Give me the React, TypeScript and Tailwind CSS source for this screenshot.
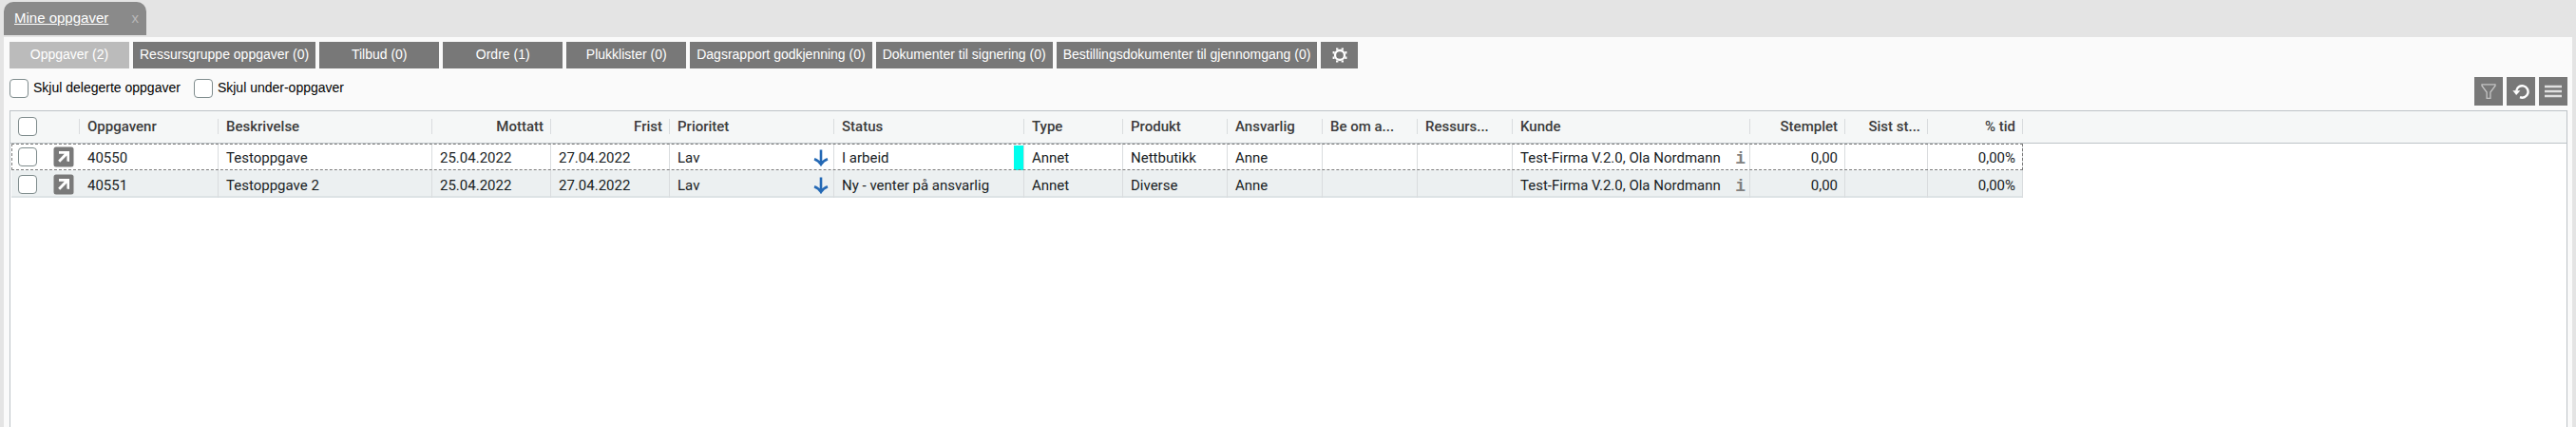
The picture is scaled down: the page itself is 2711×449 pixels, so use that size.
import type { ReactNode } from "react";

type Column = {
  id: string;
  label: string;
  width: string;
  align?: "right";
};

type Task = {
  id: string;
  title: string;
  received: string;
  due: string;
  priority: string;
  status: string;
  product: string;
  selected?: boolean;
};

const TABS = [
  "Oppgaver (2)",
  "Ressursgruppe oppgaver (0)",
  "Tilbud (0)",
  "Ordre (1)",
  "Plukklister (0)",
  "Dagsrapport godkjenning (0)",
  "Dokumenter til signering (0)",
  "Bestillingsdokumenter til gjennomgang (0)",
];

const COLUMNS: Column[] = [
  { id: "nr", label: "Oppgavenr", width: "w-[146px]" },
  { id: "title", label: "Beskrivelse", width: "w-[225px]" },
  { id: "received", label: "Mottatt", width: "w-[125px]", align: "right" },
  { id: "due", label: "Frist", width: "w-[125px]", align: "right" },
  { id: "priority", label: "Prioritet", width: "w-[173px]" },
  { id: "status", label: "Status", width: "w-[200px]" },
  { id: "type", label: "Type", width: "w-[104px]" },
  { id: "product", label: "Produkt", width: "w-[110px]" },
  { id: "owner", label: "Ansvarlig", width: "w-[100px]" },
  { id: "help", label: "Be om a...", width: "w-[100px]" },
  { id: "resource", label: "Ressurs...", width: "w-[100px]" },
  { id: "customer", label: "Kunde", width: "w-[250px]" },
  { id: "stamped", label: "Stemplet", width: "w-[100px]", align: "right" },
  { id: "last", label: "Sist st...", width: "w-[87px]", align: "right" },
  { id: "time", label: "% tid", width: "w-[100px]", align: "right" },
];

const TASKS: Task[] = [
  {
    id: "40550",
    title: "Testoppgave",
    received: "25.04.2022",
    due: "27.04.2022",
    priority: "Lav",
    status: "I arbeid",
    product: "Nettbutikk",
    selected: true,
  },
  {
    id: "40551",
    title: "Testoppgave 2",
    received: "25.04.2022",
    due: "27.04.2022",
    priority: "Lav",
    status: "Ny - venter på ansvarlig",
    product: "Diverse",
  },
];

const checkboxClass =
  "block size-5 shrink-0 appearance-none rounded border border-[#7f8c8d] bg-white checked:bg-[#787878]";

function GearIcon() {
  return (
    <svg viewBox="0 0 16 16" className="size-4" fill="none" stroke="#fff" aria-hidden="true">
      <circle cx="8" cy="8" r="5" strokeWidth="2.3" />
      <g strokeWidth="2.4">
        <path d="M10.8 .6v2M5.2 .6v2M10.8 13.4v2M5.2 13.4v2" />
        <path d="M.6 5.2h2M.6 10.8h2M13.4 5.2h2M13.4 10.8h2" />
      </g>
    </svg>
  );
}

function FilterIcon() {
  return (
    <svg viewBox="0 0 16 16" className="size-4" fill="none" stroke="#c4c4c4" aria-hidden="true">
      <path d="M1 .8h14v1.4L9.9 9v6.3H6.1V9L1 2.2z" strokeWidth="1.3" />
    </svg>
  );
}

function ReloadIcon() {
  return (
    <svg viewBox="0 0 18 18" className="size-[18px]" fill="none" aria-hidden="true">
      <path d="M4.2 8.6A6.2 6.2 0 1 1 8 15.2" stroke="#fff" strokeWidth="2.4" />
      <path d="M.4 8.2h8L4.2 13z" fill="#fff" />
    </svg>
  );
}

function MenuIcon() {
  return (
    <svg viewBox="0 0 20 14" className="h-3.5 w-5" aria-hidden="true">
      <path d="M1 2h18M1 7h18M1 12h18" stroke="#e0e0e0" strokeWidth="2.4" />
    </svg>
  );
}

function OpenIcon() {
  return (
    <svg viewBox="0 0 22 22" className="size-[22px]" aria-hidden="true">
      <rect x=".5" y=".5" width="21" height="21" rx="2.5" fill="#7a7a7a" />
      <path d="M6 5h11v11l-2.6-.6V9.6l-7.2 7.2-2-2 6.6-7H6z" fill="#fff" />
    </svg>
  );
}

function DownArrowIcon() {
  return (
    <svg viewBox="0 0 16 18" className="h-[18px] w-4 shrink-0" fill="none" aria-hidden="true">
      <path d="M8 .5v15M1 10.2q4.6 1.6 7 5.6 2.4-4 7-5.6" stroke="#2469b5" strokeWidth="2.6" />
    </svg>
  );
}

function ToolButton({ label, children }: { label: string; children: ReactNode }) {
  return (
    <button
      type="button"
      aria-label={label}
      className="flex size-[30px] items-center justify-center bg-[#787878]"
    >
      {children}
    </button>
  );
}

function Cell({ children, right = false }: { children?: ReactNode; right?: boolean }) {
  return (
    <td
      className={`overflow-hidden border-r border-[#d9dcde] p-0 pt-0.5 whitespace-nowrap ${
        right ? "pr-[7px] text-right" : "pl-2"
      }`}
    >
      {children}
    </td>
  );
}

function TaskRow({ task }: { task: Task }) {
  return (
    <tr
      className={
        task.selected
          ? "h-7 bg-white outline-1 -outline-offset-1 outline-dashed outline-[#7c7c7c]"
          : "h-[29px] bg-[#ecf0f1] shadow-[inset_0_-2px_0_#dde3e5]"
      }
    >
      <td className="p-0 pl-[7px]">
        <input type="checkbox" aria-label={`Velg ${task.id}`} className={checkboxClass} />
      </td>
      <td className="p-0 pl-2">
        <button type="button" aria-label={`Åpne ${task.id}`} className="block">
          <OpenIcon />
        </button>
      </td>
      <Cell>{task.id}</Cell>
      <Cell>{task.title}</Cell>
      <Cell>{task.received}</Cell>
      <Cell>{task.due}</Cell>
      <Cell>
        <div className="flex items-center justify-between pr-[5px]">
          {task.priority}
          <DownArrowIcon />
        </div>
      </Cell>
      <Cell>
        <div className="flex items-center justify-between">
          {task.status}
          {task.selected && <span className="h-[26px] w-2.5 bg-[#00ffee]" />}
        </div>
      </Cell>
      <Cell>Annet</Cell>
      <Cell>{task.product}</Cell>
      <Cell>Anne</Cell>
      <Cell />
      <Cell />
      <Cell>
        <div className="flex items-center justify-between pr-1">
          Test-Firma V.2.0, Ola Nordmann
          <span className="pt-0.5 font-['Liberation_Mono',monospace] text-lg leading-5 font-bold text-[#808080]">
            i
          </span>
        </div>
      </Cell>
      <Cell right>0,00</Cell>
      <Cell />
      <Cell right>0,00%</Cell>
    </tr>
  );
}

export default function App() {
  return (
    <div className="flex min-h-screen flex-col bg-[#e4e4e4] px-1 pt-0.5 font-['Liberation_Sans',Arial,sans-serif] text-sm text-black">
      <header className="flex h-[37px] items-start">
        <div className="flex h-[35px] w-[150px] items-center justify-between rounded-t-[10px] bg-[#8a8a8a] pr-2 pb-0.5 pl-[11px] text-[15px]">
          <a href="#oppgaver" className="text-white underline">
            Mine oppgaver
          </a>
          <button type="button" aria-label="Lukk" className="text-[#b8b8b8]">
            x
          </button>
        </div>
      </header>

      <main className="flex grow flex-col bg-[#fafafa] pt-[5px] pr-[5px] pl-1.5">
        <nav aria-label="Oppgavetyper" className="flex gap-1">
          {TABS.map((tab, index) => (
            <button
              key={tab}
              type="button"
              className={`h-7 min-w-[126px] px-[7px] pb-0.5 whitespace-nowrap text-white ${
                index === 0 ? "bg-[#bbbbbb]" : "bg-[#787878]"
              }`}
            >
              {tab}
            </button>
          ))}
          <button
            type="button"
            aria-label="Innstillinger"
            className="flex h-7 w-[39px] items-center justify-center bg-[#787878]"
          >
            <GearIcon />
          </button>
        </nav>

        <div className="flex items-start justify-between pt-[9px] pb-[5px]">
          <div className="flex gap-3.5 pt-0.5">
            <label className="flex items-start gap-[5px] leading-[18px]">
              <input type="checkbox" className={checkboxClass} />
              Skjul delegerte oppgaver
            </label>
            <label className="flex items-start gap-[5px] leading-[18px]">
              <input type="checkbox" className={checkboxClass} />
              Skjul under-oppgaver
            </label>
          </div>
          <div className="flex gap-1">
            <ToolButton label="Filter">
              <FilterIcon />
            </ToolButton>
            <ToolButton label="Oppdater">
              <ReloadIcon />
            </ToolButton>
            <ToolButton label="Meny">
              <MenuIcon />
            </ToolButton>
          </div>
        </div>

        <section className="grow overflow-hidden border border-b-0 border-[#bdc3c7] bg-white font-[Roboto,sans-serif] text-[15px] leading-5 text-[#181d1f]">
          <div className="h-[34px] border-b border-[#bdc3c7] bg-[#f5f7f7]" />
          <table className="-mt-[34px] ml-px w-[2117px] table-fixed border-separate border-spacing-0">
            <thead>
              <tr className="h-[34px] text-[#3c3c3c]">
                <th className="w-9 p-0 pb-0.5 pl-[7px]">
                  <input type="checkbox" aria-label="Velg alle" className={checkboxClass} />
                </th>
                <th className="w-9 p-0 pb-0.5">
                  <div className="h-4 border-r border-[#d9dcde]" />
                </th>
                {COLUMNS.map((column) => (
                  <th
                    key={column.id}
                    className={`${column.width} p-0 pb-0.5 font-medium whitespace-nowrap ${
                      column.align === "right" ? "text-right" : "text-left"
                    }`}
                  >
                    <div
                      className={`h-4 border-r border-[#d9dcde] leading-4 ${
                        column.align === "right" ? "pr-[7px]" : "pl-2"
                      }`}
                    >
                      {column.label}
                    </div>
                  </th>
                ))}
              </tr>
            </thead>
            <tbody>
              {TASKS.map((task) => (
                <TaskRow key={task.id} task={task} />
              ))}
            </tbody>
          </table>
        </section>
      </main>
    </div>
  );
}
